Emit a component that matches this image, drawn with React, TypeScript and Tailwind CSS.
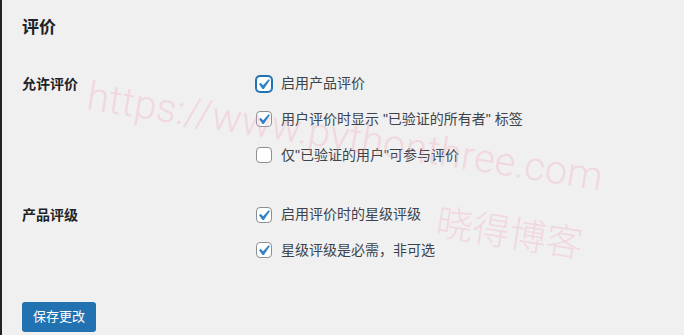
import React from 'react';

/* -------------------------------------------------------------------------- */
/*  Static Data                                                                */
/* -------------------------------------------------------------------------- */

type Option = { label: string; checked: boolean; focused?: boolean };

const sections: { title: string; options: Option[] }[] = [
  {
    title: '允许评价',
    options: [
      { label: '启用产品评价', checked: true, focused: true },
      { label: '用户评价时显示 "已验证的所有者" 标签', checked: true },
      { label: '仅"已验证的用户"可参与评价', checked: false },
    ],
  },
  {
    title: '产品评级',
    options: [
      { label: '启用评价时的星级评级', checked: true },
      { label: '星级评级是必需，非可选', checked: true },
    ],
  },
];

const font = { fontFamily: '"Liberation Sans", "Noto Sans CJK SC", sans-serif' };

/* -------------------------------------------------------------------------- */
/*  Component                                                                  */
/* -------------------------------------------------------------------------- */

function Checkbox({ checked, focused }: { checked: boolean; focused?: boolean }) {
  return (
    <span
      className={`relative box-border block h-4 w-4 shrink-0 rounded-[4px] border bg-white ${
        focused
          ? 'border-[#2271b1] shadow-[0_0_0_1px_#2271b1]'
          : 'border-[#8c8f94]'
      }`}
    >
      {checked && (
        <svg
          viewBox="0 0 20 20"
          className="absolute left-[-4px] top-[-3px] h-[21px] w-[21px]"
        >
          <path
            d="M14.83 4.89l1.34.94-5.81 8.38H9.02L5.78 9.67l1.34-1.25 2.57 2.4z"
            fill="#3582c4"
          />
        </svg>
      )}
    </span>
  );
}

export default function App() {
  return (
    <div
      className="relative flex h-[335px] w-[684px] overflow-hidden bg-[#f0f0f1]"
      style={font}
    >
      {/* admin menu edge */}
      <div className="w-[2px] shrink-0 bg-[#1d2327]" />

      <div className="relative z-0 flex-1 pl-5 pt-[18px]">
        <h2 className="text-[17px] font-semibold leading-5 text-[#1d2327]">
          评价
        </h2>

        <div className="mt-[28px]">
          {sections.map((section, i) => (
            <div key={section.title} className={`flex ${i > 0 ? 'mt-[24px]' : ''}`}>
              <div className="flex h-9 w-[234px] shrink-0 items-center text-[14px] font-semibold text-[#1d2327]">
                {section.title}
              </div>
              <div className="flex flex-col">
                {section.options.map((opt, j) => (
                  <label
                    key={opt.label}
                    className={`flex items-center gap-[9px] text-[14px] text-[#3c434a] ${
                      j === 0 ? 'h-[35px]' : 'h-9'
                    }`}
                  >
                    <Checkbox checked={opt.checked} focused={opt.focused} />
                    <span>{opt.label}</span>
                  </label>
                ))}
              </div>
            </div>
          ))}
        </div>

        <button className="mt-[34px] h-[30px] rounded-[3px] bg-[#2271b1] px-[11px] text-[13px] leading-[30px] text-white">
          保存更改
        </button>
      </div>

      {/* watermark */}
      <div className="pointer-events-none absolute inset-0 z-10">
        <div
          className="absolute left-[345px] top-[137px] -translate-x-1/2 -translate-y-1/2 rotate-[9deg] whitespace-nowrap text-[40px] font-light leading-none text-[#f0a3b4] opacity-30"
          style={{ fontFamily: 'Roboto, "Liberation Sans", sans-serif' }}
        >
          https://www.pythonthree.com
        </div>
        <div
          className="absolute left-[510px] top-[231px] -translate-x-1/2 -translate-y-1/2 rotate-[9deg] whitespace-nowrap text-[37px] font-light leading-none text-[#f0a3b4] opacity-30"
          style={{ fontFamily: '"Noto Sans CJK SC", sans-serif' }}
        >
          晓得博客
        </div>
      </div>
    </div>
  );
}
